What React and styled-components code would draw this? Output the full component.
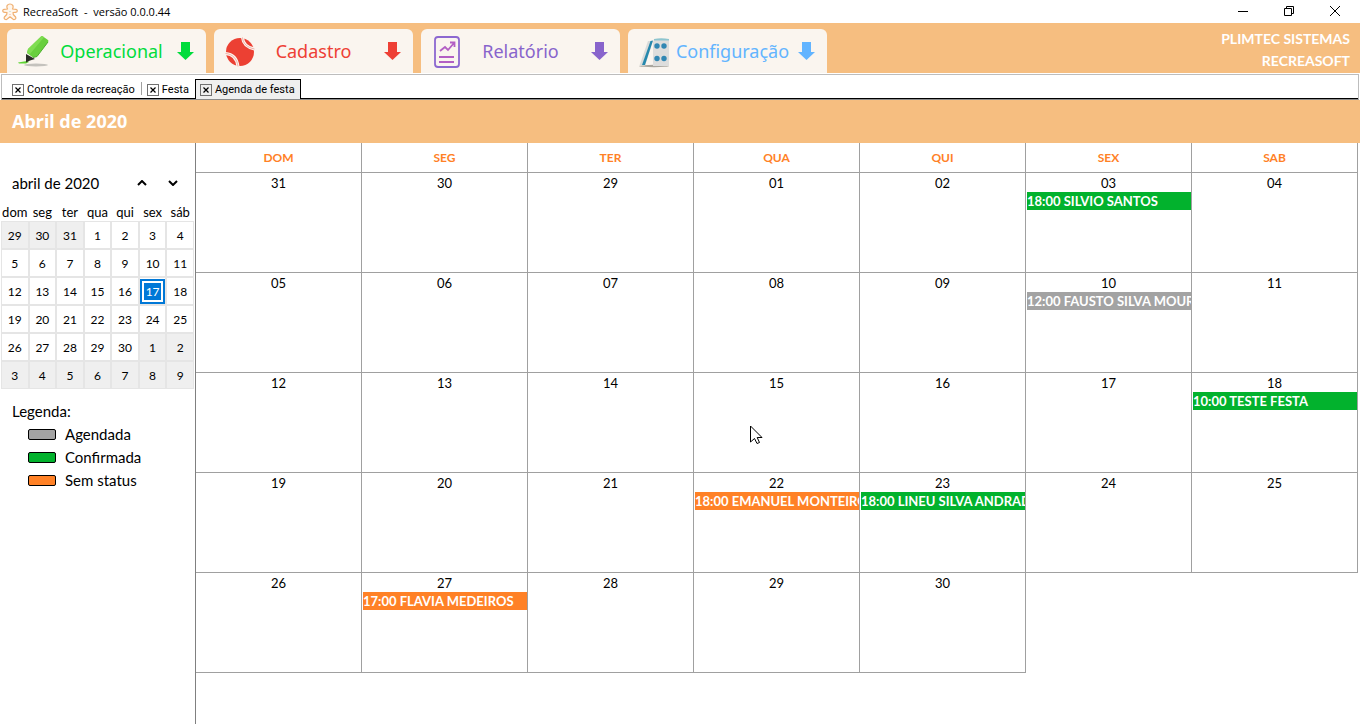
import React from 'react';
import styled, { createGlobalStyle } from 'styled-components';

const GlobalStyle = createGlobalStyle`
    * {
        box-sizing: border-box;
    }

    body {
        margin: 0;
        background: #fff;
        color: #000;
        font-family: Lato, 'Open Sans', sans-serif;
        overflow: hidden;
    }

    button {
        margin: 0;
        padding: 0;
        border: 0;
        background: none;
        color: inherit;
        font: inherit;
    }
`;

const Page = styled.div`
    display: flex;
    flex-direction: column;
    min-height: 100vh;
`;

/* Title bar */

const TitleBar = styled.header`
    display: flex;
    align-items: center;
    height: 23px;
    padding-left: 2px;
    font-family: 'Open Sans', sans-serif;
    font-size: 11px;
`;

const AppName = styled.span`
    flex: 1;
    padding-left: 5px;
    white-space: pre;
`;

const WindowButton = styled.button`
    display: flex;
    align-items: center;
    justify-content: center;
    width: 46px;
    height: 20px;
    margin-bottom: 2px;

    &:last-child {
        margin-right: 2px;
    }
`;

/* Main menu */

const Toolbar = styled.nav`
    display: flex;
    align-items: flex-end;
    gap: 8px;
    height: 50px;
    padding: 0 10px 0 7px;
    background: #f6be80;
`;

const MenuButton = styled.button`
    display: flex;
    align-items: center;
    width: 199px;
    height: 44px;
    padding: 0 12px 0 9px;
    border-radius: 6px 6px 0 0;
    background: #faf5ef;
    color: ${({ $color }) => $color};
`;

const MenuLabel = styled.span`
    flex: 1;
    padding-right: ${({ $short }) => ($short ? '14px' : '4px')};
    font-family: 'Noto Sans', sans-serif;
    font-size: 18px;
    font-weight: 400;
    text-align: center;
`;

const Company = styled.div`
    flex: 1;
    height: 100%;
    padding-top: 5px;
    color: #fff;
    font-size: 14px;
    font-weight: 700;
    line-height: 22px;
    text-align: right;
`;

/* Open documents */

const TabStrip = styled.div`
    display: flex;
    align-items: flex-end;
    height: 26px;
    margin: 1px 1px 0;
    padding-left: 5px;
    border: 1px solid #bdbdbd;
    border-bottom-color: #8b8b8b;
    box-shadow: inset 0 -1px 0 #000;
    font-family: Roboto, sans-serif;
    font-size: 11px;
`;

const Tab = styled.div`
    display: flex;
    align-items: center;
    gap: 3px;
    height: 20px;
    padding: 0 5px 0 4px;
    border: 1px solid ${({ $active }) => ($active ? '#000' : 'transparent')};
    border-bottom: 0;
    background: ${({ $active }) => ($active ? '#efefef' : 'none')};
    white-space: nowrap;
`;

const Divider = styled.span`
    width: 1px;
    height: 13px;
    margin-bottom: 4px;
    background: #a0a0a0;
`;

const CloseTab = styled.button`
    display: flex;
    width: 12px;
    height: 12px;
`;

const MonthTitle = styled.h1`
    height: 43px;
    margin: 0;
    padding-left: 12px;
    background: #f6be80;
    color: #fff;
    font-family: 'Noto Sans', sans-serif;
    font-size: 18px;
    font-weight: 700;
    line-height: 43px;
`;

const Content = styled.main`
    display: flex;
    flex: 1;
`;

/* Left panel */

const Sidebar = styled.aside`
    flex: 0 0 196px;
    padding: 30px 1px 0;
    border-right: 1px solid #808080;
`;

const MiniHeader = styled.div`
    display: flex;
    align-items: center;
    height: 20px;
    padding: 0 7px 0 11px;
    font-size: 15px;
    line-height: 20px;
`;

const MiniTitle = styled.span`
    flex: 1;
`;

const ArrowButton = styled.button`
    display: flex;
    align-items: center;
    justify-content: center;
    width: 28px;
    height: 20px;

    & + & {
        margin-left: 3px;
    }
`;

const MiniTable = styled.table`
    width: 100%;
    margin-top: 10px;
    border-spacing: 0;
    table-layout: fixed;
`;

const MiniHead = styled.th`
    height: 18px;
    padding: 0;
    font-size: 13px;
    font-weight: 400;
    line-height: 18px;
    text-align: center;
`;

const MiniCell = styled.td`
    height: 28px;
    padding: 0;
    border: 1px solid #e5e5e5;
    background: ${({ $other }) => ($other ? '#efefef' : '#fff')};
    font-size: 12px;
`;

const MiniDay = styled.button`
    display: block;
    width: 100%;
    height: 25px;
    border: ${({ $selected }) => ($selected ? '2px solid #0078d7' : '0')};
    background: ${({ $selected }) => ($selected ? '#0078d7' : 'none')};
    box-shadow: ${({ $selected }) => ($selected ? 'inset 0 0 0 2px #fff' : 'none')};
    color: ${({ $selected }) => ($selected ? '#fff' : '#000')};
    text-align: center;
`;

const Legend = styled.section`
    padding: 11px;
    font-size: 15px;
    line-height: 23px;
`;

const LegendTitle = styled.h2`
    margin: 0;
    font-size: 15px;
    font-weight: 400;
`;

const LegendList = styled.ul`
    margin: 0;
    padding: 0 0 0 16px;
    list-style: none;
`;

const LegendItem = styled.li`
    display: flex;
    align-items: center;
    gap: 9px;
`;

const Swatch = styled.span`
    width: 28px;
    height: 11px;
    border: 1px solid #000;
    border-radius: 2px;
    background: ${({ $color }) => $color};
`;

/* Month grid */

const MonthWrapper = styled.div`
    flex: 1;
    padding-right: 2px;
`;

const MonthTable = styled.table`
    width: 100%;
    border-spacing: 0;
    table-layout: fixed;
`;

const WeekDay = styled.th`
    height: 30px;
    padding: 0;
    border-right: 1px solid #a0a0a0;
    border-bottom: 1px solid #a0a0a0;
    color: #ff8126;
    font-size: 12px;
    font-weight: 700;
`;

const DayCell = styled.td`
    position: relative;
    height: 100px;
    padding: 0;
    border-right: 1px solid #a0a0a0;
    border-bottom: 1px solid #a0a0a0;
    vertical-align: top;
`;

const DayNumber = styled.div`
    height: 19px;
    font-size: 13px;
    line-height: 21px;
    text-align: center;
`;

const Event = styled.button`
    display: block;
    width: 100%;
    height: 18px;
    border-left: 1px solid #fff;
    background: ${({ $color }) => $color};
    color: #fff;
    font-size: 13px;
    font-weight: 700;
    line-height: 18px;
    text-align: left;
    white-space: nowrap;
    overflow: hidden;
`;

const Pointer = styled.svg`
    position: absolute;
    top: 52px;
    left: 56px;
`;

const STATUS = {
    agendada: { label: 'Agendada', color: '#a3a3a3' },
    confirmada: { label: 'Confirmada', color: '#02b22d' },
    semStatus: { label: 'Sem status', color: '#ff8126' },
};

const weekDays = ['DOM', 'SEG', 'TER', 'QUA', 'QUI', 'SEX', 'SAB'];

const weeks = [
    ['31', '30', '29', '01', '02', '03', '04'],
    ['05', '06', '07', '08', '09', '10', '11'],
    ['12', '13', '14', '15', '16', '17', '18'],
    ['19', '20', '21', '22', '23', '24', '25'],
    ['26', '27', '28', '29', '30'],
];

// keyed by week index and day
const events = {
    '0-03': { text: '18:00 SILVIO SANTOS', status: 'confirmada' },
    '1-10': { text: '12:00 FAUSTO SILVA MOURA', status: 'agendada' },
    '2-18': { text: '10:00 TESTE FESTA', status: 'confirmada' },
    '3-22': { text: '18:00 EMANUEL MONTEIRO', status: 'semStatus' },
    '3-23': { text: '18:00 LINEU SILVA ANDRADE', status: 'confirmada' },
    '4-27': { text: '17:00 FLAVIA MEDEIROS', status: 'semStatus' },
};

const miniWeekDays = ['dom', 'seg', 'ter', 'qua', 'qui', 'sex', 'sáb'];

const miniWeeks = [
    [29, 30, 31, 1, 2, 3, 4],
    [5, 6, 7, 8, 9, 10, 11],
    [12, 13, 14, 15, 16, 17, 18],
    [19, 20, 21, 22, 23, 24, 25],
    [26, 27, 28, 29, 30, 1, 2],
    [3, 4, 5, 6, 7, 8, 9],
];

const isOtherMonth = (week, day) => (week === 0 && day > 7) || (week > 3 && day < 10);

const LogoIcon = () => (
    <svg width="16" height="18" viewBox="0 0 16 18" fill="#fff6ec" stroke="#f0b072" strokeWidth="1.2" strokeLinejoin="round">
        <path d="M5.500 6C4 3 5.500 1 8 1s4 2 2.500 5l3.500.4c2 .6 1.500 3-.5 3L11 9.500l.3 2 2.300 2.500c1 2-1.600 3.500-2.800 2L8 13.800 5.200 16c-1.200 1.500-3.800 0-2.800-2l2.300-2.500.3-2-2.500-.1c-2 0-2.500-2.400-.5-3z" />
        <path d="M8 8v.5" stroke="#6fc3a0" />
        <path d="M8 11v.5" stroke="#e5786f" />
    </svg>
);

const MarkerIcon = () => (
    <svg width="34" height="34" viewBox="0 0 34 34">
        <ellipse cx="20" cy="31" rx="12" ry="1.500" fill="#c4c2bd" />
        <path d="M2 28.500 11 27l2 1-3 1.500H3z" fill="#5fd435" />
        <path d="m10 20 9 5-5 1.500-4 2z" fill="#2a2d26" />
        <path d="M25 2.500q1-.8 2 0l5 3.500q1 .8 0 2L21 22.500l-4 1-6-4.500 1-4z" fill="#69cf3e" />
        <path d="M25 2.500q1-.8 2 0l1 .8L14 20l-3-1 1-4z" fill="#7fdd52" />
        <path d="M32 8 21 22.500l-4 1" fill="none" stroke="#4cb02d" />
    </svg>
);

const BallIcon = () => (
    <svg width="34" height="34" viewBox="0 0 34 34">
        <circle cx="17" cy="18" r="14" fill="#ec4033" />
        <g fill="none" stroke="#faf5ef" strokeWidth="3">
            <path d="M19.500 3.500c.5 6 4.500 10 12 11.500" />
            <path d="M2.500 19.500c7 .5 11.500 5 12.500 13" />
        </g>
        <g fill="none" stroke="#f0a096" strokeWidth=".8">
            <path d="M19.500 3.500c.5 6 4.500 10 12 11.500" />
            <path d="M2.500 19.500c7 .5 11.500 5 12.500 13" />
        </g>
    </svg>
);

const ReportIcon = () => (
    <svg width="34" height="34" viewBox="0 0 34 34" fill="none" stroke="#b35fc4" strokeWidth="1.800">
        <rect x="5" y="3" width="24" height="30" rx="3" stroke="#8c68d0" />
        <path d="m10 17 5-4 3 3 6-7M20 8.500h4.500V13" />
        <path d="M9 23h15M9 28h15" strokeWidth="2" />
    </svg>
);

const DominoIcon = () => (
    <svg width="34" height="34" viewBox="0 0 34 34">
        <ellipse cx="17" cy="32" rx="15" ry="1.200" fill="#aaa69e" />
        <path d="M11 7h5L8 31.500H2.500z" fill="#d9dbda" />
        <path d="m13.500 7 2.500-.5L8 31H5z" fill="#2688ad" />
        <path d="M17 5h15v27H16V8z" fill="#dddddc" />
        <path d="M17 5q7-1.500 15 0v1.500H17z" fill="#8ec5cf" />
        <g fill="#3187b3">
            <circle cx="20" cy="12" r="2.700" />
            <circle cx="27" cy="12" r="2.700" />
            <circle cx="20" cy="24.500" r="2.700" />
            <circle cx="27" cy="24.500" r="2.700" />
        </g>
    </svg>
);

const DownArrow = () => (
    <svg width="17" height="18" viewBox="0 0 17 18" fill="currentColor">
        <path d="M4 0h9v10h4l-8.500 8L0 10h4z" />
    </svg>
);

const CloseBox = () => (
    <svg width="12" height="12" viewBox="0 0 12 12" fill="none">
        <rect x=".5" y=".5" width="11" height="11" stroke="#707070" />
        <path d="m3.500 3.500 5 5M8.500 3.500l-5 5" stroke="#000" strokeWidth="1.200" />
    </svg>
);

const menu = [
    { label: 'Operacional', color: '#00dc3c', Icon: MarkerIcon },
    { label: 'Cadastro', color: '#ee4035', Icon: BallIcon, short: true },
    { label: 'Relatório', color: '#8864cc', Icon: ReportIcon, short: true },
    { label: 'Configuração', color: '#62b4ff', Icon: DominoIcon },
];

const DocumentTab = ({ label, active }) => (
    <Tab $active={active}>
        <CloseTab aria-label={`Fechar ${label}`}><CloseBox /></CloseTab>
        <button>{label}</button>
    </Tab>
);

const App = () => (
    <Page>
        <GlobalStyle />
        <TitleBar>
            <LogoIcon />
            <AppName>{'RecreaSoft  -  versão 0.0.0.44'}</AppName>
            <WindowButton aria-label="Minimizar">
                <svg width="10" height="10"><path d="M0 5.500h10" stroke="#000" /></svg>
            </WindowButton>
            <WindowButton aria-label="Restaurar">
                <svg width="10" height="10" fill="none" stroke="#000">
                    <path d="M.5 2.500h7v7h-7zM2.500 2.500v-2h7v7h-2" />
                </svg>
            </WindowButton>
            <WindowButton aria-label="Fechar">
                <svg width="10" height="10"><path d="m0 0 10 10M10 0 0 10" stroke="#000" /></svg>
            </WindowButton>
        </TitleBar>

        <Toolbar>
            {menu.map(({ label, color, Icon, short }) => (
                <MenuButton key={label} $color={color}>
                    <Icon />
                    <MenuLabel $short={short}>{label}</MenuLabel>
                    <DownArrow />
                </MenuButton>
            ))}
            <Company>
                <div>PLIMTEC SISTEMAS</div>
                <div>RECREASOFT</div>
            </Company>
        </Toolbar>

        <TabStrip>
            <DocumentTab label="Controle da recreação" />
            <Divider />
            <DocumentTab label="Festa" />
            <DocumentTab label="Agenda de festa" active />
        </TabStrip>

        <MonthTitle>Abril de 2020</MonthTitle>

        <Content>
            <Sidebar>
                <MiniHeader>
                    <MiniTitle>abril de 2020</MiniTitle>
                    <ArrowButton aria-label="Mês anterior">
                        <svg width="10" height="6" fill="none" stroke="#000" strokeWidth="2"><path d="m1 5 4-4 4 4" /></svg>
                    </ArrowButton>
                    <ArrowButton aria-label="Próximo mês">
                        <svg width="10" height="6" fill="none" stroke="#000" strokeWidth="2"><path d="m1 1 4 4 4-4" /></svg>
                    </ArrowButton>
                </MiniHeader>
                <MiniTable>
                    <thead>
                        <tr>
                            {miniWeekDays.map((day) => <MiniHead key={day}>{day}</MiniHead>)}
                        </tr>
                    </thead>
                    <tbody>
                        {miniWeeks.map((week, index) => (
                            <tr key={index}>
                                {week.map((day) => (
                                    <MiniCell key={day} $other={isOtherMonth(index, day)}>
                                        <MiniDay $selected={day === 17}>{day}</MiniDay>
                                    </MiniCell>
                                ))}
                            </tr>
                        ))}
                    </tbody>
                </MiniTable>
                <Legend>
                    <LegendTitle>Legenda:</LegendTitle>
                    <LegendList>
                        {Object.values(STATUS).map(({ label, color }) => (
                            <LegendItem key={label}>
                                <Swatch $color={color} />
                                {label}
                            </LegendItem>
                        ))}
                    </LegendList>
                </Legend>
            </Sidebar>

            <MonthWrapper>
                <MonthTable>
                    <thead>
                        <tr>
                            {weekDays.map((day) => <WeekDay key={day}>{day}</WeekDay>)}
                        </tr>
                    </thead>
                    <tbody>
                        {weeks.map((week, index) => (
                            <tr key={index}>
                                {week.map((day) => {
                                    const event = events[`${index}-${day}`];
                                    return (
                                        <DayCell key={day}>
                                            <DayNumber>{day}</DayNumber>
                                            {event && (
                                                <Event $color={STATUS[event.status].color}>{event.text}</Event>
                                            )}
                                            {day === '15' && (
                                                <Pointer width="13" height="20" viewBox="0 0 13 20">
                                                    <path d="M.5 1v16l4-3.500 2.500 5 2.500-1-2.300-5H12z" fill="#fff" stroke="#000" />
                                                </Pointer>
                                            )}
                                        </DayCell>
                                    );
                                })}
                            </tr>
                        ))}
                    </tbody>
                </MonthTable>
            </MonthWrapper>
        </Content>
    </Page>
);

export default App;
